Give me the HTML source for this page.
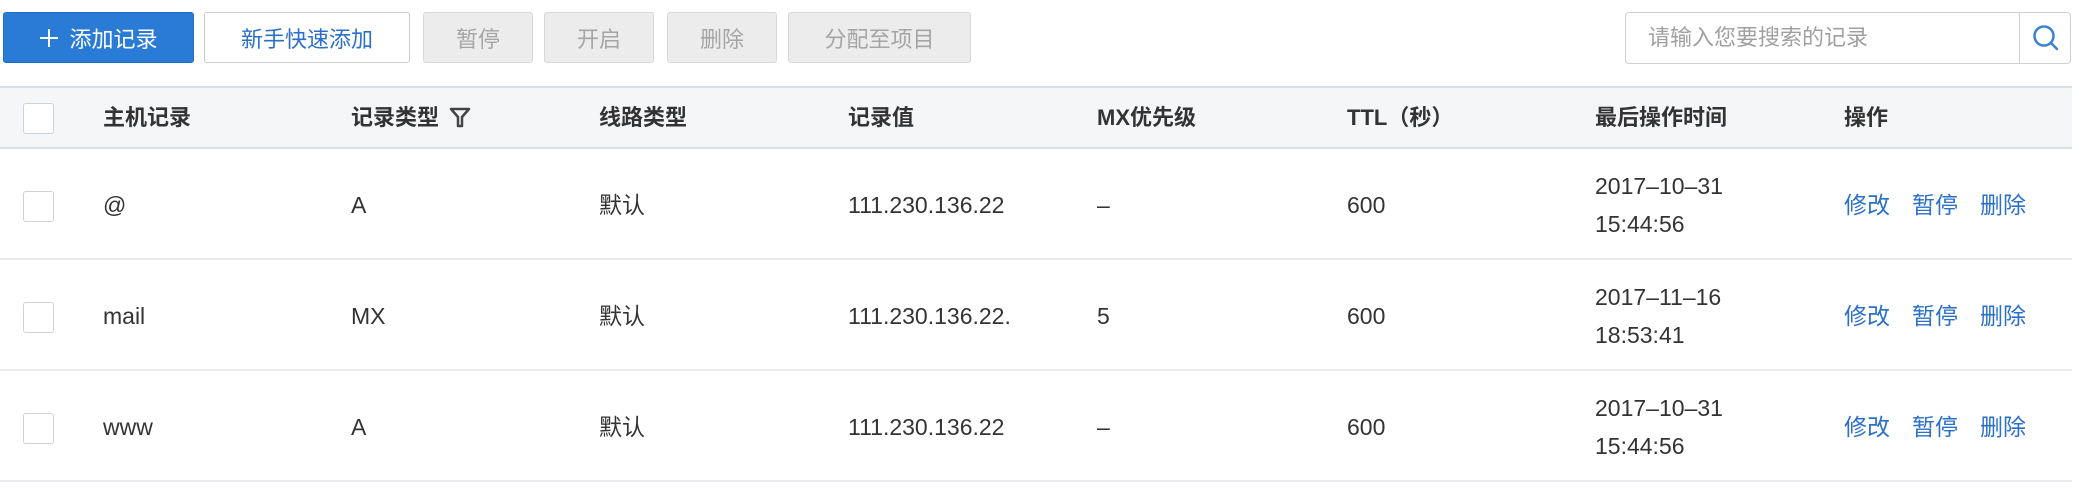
<!DOCTYPE html>
<html><head><meta charset="utf-8"><style>
*{box-sizing:border-box;margin:0;padding:0}
body{width:2090px;height:490px;background:#fff;font-family:"Liberation Sans","Noto Sans CJK SC",sans-serif;color:#333;position:relative;overflow:hidden}
.btn{position:absolute;top:12px;height:51px;border-radius:3px;font-size:22px;display:flex;align-items:center;justify-content:center}
.p{background:#2a7bd6;color:#fff;border:1px solid #1f6cc4}
.w{background:#fff;color:#2a6fc9;border:1px solid #c9ccd1}
.d{background:#ececec;color:#a5a5a5;border:1px solid #d8d8d8}
.search{position:absolute;left:1625px;top:12px;width:446px;height:52px;border:1px solid #cdd0d4;border-radius:4px;background:#fff}
.search span{position:absolute;left:22px;top:10px;font-size:22px;line-height:30px;color:#a0a0a0}
.search .div{position:absolute;left:393px;top:0;width:1px;height:50px;background:#cdd0d4}
.hdr{position:absolute;left:0;top:86px;width:2072px;height:63px;background:#f5f6f8;border-top:2px solid #dcdfe4;border-bottom:2px solid #dcdfe4}
.row{position:absolute;left:0;width:2072px;border-bottom:2px solid #e8eaed}
.cb{position:absolute;left:23px;width:31px;height:31px;border:1px solid #cfd2d6;border-radius:3px;background:#fff}
.t{position:absolute;font-size:23px;line-height:30px;white-space:nowrap}
.h{font-weight:bold;color:#333;font-size:22px}
.a{color:#2a6fc9}
</style></head><body>
<div class="btn p" style="left:3px;width:191px"><svg width="20" height="20" viewBox="0 0 20 20" style="margin-right:10px"><path d="M10 1v18M1 10h18" stroke="#fff" stroke-width="2"/></svg>添加记录</div>
<div class="btn w" style="left:204px;width:206px">新手快速添加</div>
<div class="btn d" style="left:423px;width:110px">暂停</div>
<div class="btn d" style="left:544px;width:110px">开启</div>
<div class="btn d" style="left:667px;width:110px">删除</div>
<div class="btn d" style="left:788px;width:183px">分配至项目</div>
<div class="search"><span>请输入您要搜索的记录</span><div class="div"></div>
<svg style="position:absolute;left:405px;top:10px" width="30" height="30" viewBox="0 0 30 30"><circle cx="13" cy="13" r="9.5" fill="none" stroke="#3a82d4" stroke-width="2.5"/><line x1="20" y1="20" x2="26" y2="26" stroke="#3a82d4" stroke-width="2.5" stroke-linecap="round"/></svg></div>

<div class="hdr">
<div class="cb" style="top:15px"></div>
<div class="t h" style="left:103px;top:15px">主机记录</div>
<div class="t h" style="left:351px;top:15px">记录类型 <svg width="22" height="22" viewBox="0 0 22 22" style="vertical-align:-3px;margin-left:4px"><path d="M2 3h18l-7 8v9h-4v-9z" fill="none" stroke="#444" stroke-width="2.5" stroke-linejoin="round"/></svg></div>
<div class="t h" style="left:599px;top:15px">线路类型</div>
<div class="t h" style="left:848px;top:15px">记录值</div>
<div class="t h" style="left:1097px;top:15px">MX优先级</div>
<div class="t h" style="left:1347px;top:15px">TTL（秒）</div>
<div class="t h" style="left:1595px;top:15px">最后操作时间</div>
<div class="t h" style="left:1844px;top:15px">操作</div>
</div>

<div class="row" style="top:149px;height:111px">
<div class="cb" style="top:42px"></div>
<div class="t" style="left:103px;top:41px">@</div>
<div class="t" style="left:351px;top:41px">A</div>
<div class="t" style="left:599px;top:41px">默认</div>
<div class="t" style="left:848px;top:41px">111.230.136.22</div>
<div class="t" style="left:1097px;top:41px">–</div>
<div class="t" style="left:1347px;top:41px">600</div>
<div class="t" style="left:1595px;top:18px;line-height:38px">2017–10–31<br>15:44:56</div>
<div class="t a" style="left:1844px;top:41px">修改</div><div class="t a" style="left:1912px;top:41px">暂停</div><div class="t a" style="left:1980px;top:41px">删除</div>
</div>
<div class="row" style="top:260px;height:111px">
<div class="cb" style="top:42px"></div>
<div class="t" style="left:103px;top:41px">mail</div>
<div class="t" style="left:351px;top:41px">MX</div>
<div class="t" style="left:599px;top:41px">默认</div>
<div class="t" style="left:848px;top:41px">111.230.136.22.</div>
<div class="t" style="left:1097px;top:41px">5</div>
<div class="t" style="left:1347px;top:41px">600</div>
<div class="t" style="left:1595px;top:18px;line-height:38px">2017–11–16<br>18:53:41</div>
<div class="t a" style="left:1844px;top:41px">修改</div><div class="t a" style="left:1912px;top:41px">暂停</div><div class="t a" style="left:1980px;top:41px">删除</div>
</div>
<div class="row" style="top:371px;height:111px">
<div class="cb" style="top:42px"></div>
<div class="t" style="left:103px;top:41px">www</div>
<div class="t" style="left:351px;top:41px">A</div>
<div class="t" style="left:599px;top:41px">默认</div>
<div class="t" style="left:848px;top:41px">111.230.136.22</div>
<div class="t" style="left:1097px;top:41px">–</div>
<div class="t" style="left:1347px;top:41px">600</div>
<div class="t" style="left:1595px;top:18px;line-height:38px">2017–10–31<br>15:44:56</div>
<div class="t a" style="left:1844px;top:41px">修改</div><div class="t a" style="left:1912px;top:41px">暂停</div><div class="t a" style="left:1980px;top:41px">删除</div>
</div>
</body></html>
